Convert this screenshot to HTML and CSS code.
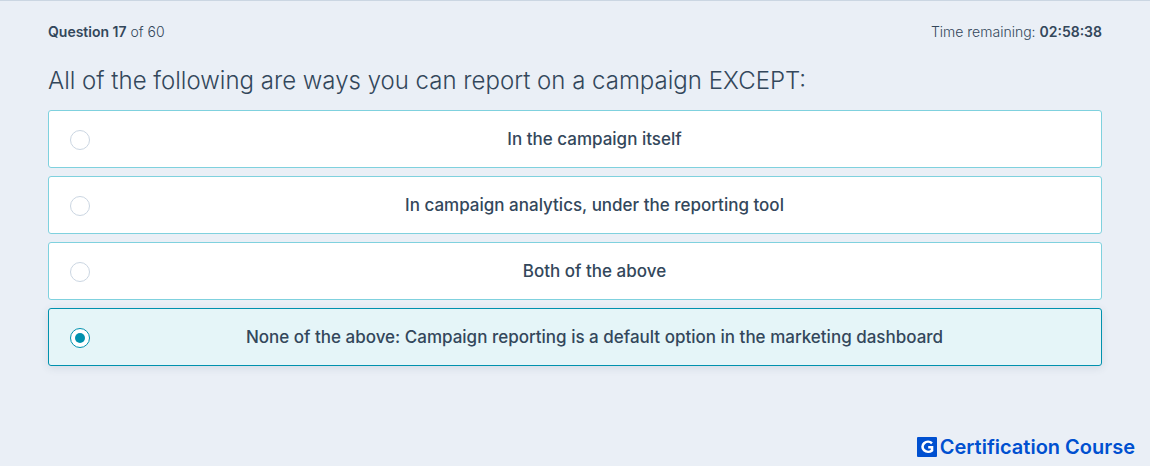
FILE: index.html
```html
<!DOCTYPE html>
<html lang="en">
<head>
<meta charset="utf-8">
<meta name="viewport" content="width=device-width, initial-scale=1">
<title>Certification exam</title>
<link rel="stylesheet" href="styles.css">
</head>
<body>
<main class="exam">
  <header class="status">
    <div><strong>Question 17</strong> of 60</div>
    <div>Time remaining: <strong>02:58:38</strong></div>
  </header>
  <form>
    <fieldset class="question">
      <legend class="title">All of the following are ways you can report on a campaign EXCEPT:</legend>
      <div class="options">
        <label class="option"><input class="radio" type="radio" name="answer"><span class="answer">In the campaign itself</span></label>
        <label class="option"><input class="radio" type="radio" name="answer"><span class="answer">In campaign analytics, under the reporting tool</span></label>
        <label class="option"><input class="radio" type="radio" name="answer"><span class="answer">Both of the above</span></label>
        <label class="option"><input class="radio" type="radio" name="answer" checked><span class="answer">None of the above: Campaign reporting is a default option in the marketing dashboard</span></label>
      </div>
    </fieldset>
  </form>
</main>
<footer class="brand">
  <svg class="mark" viewBox="0 0 20 20" aria-hidden="true">
    <rect width="20" height="20" rx="1" fill="#0050d0"/>
    <path d="M15 6.2A5.6 5 0 1 0 15 13.4V10.2H11.2" fill="none" stroke="#fff" stroke-width="2.6"/>
  </svg>
  <span>Certification Course</span>
</footer>
</body>
</html>
```
FILE: styles.css
```css
* {
  box-sizing: border-box;
}

body {
  margin: 0;
  min-height: 100vh;
  display: flex;
  flex-direction: column;
  border-top: 1px solid #cbd6e2;
  background: #eaeff6;
  color: #33475b;
  font-family: Inter, "Open Sans", sans-serif;
  font-size: 14px;
  line-height: 24px;
}

.exam {
  flex: 1;
  padding: 19px 48px 24px;
}

.status {
  display: flex;
  justify-content: space-between;
  font-weight: 300;
}

.status strong {
  font-weight: 600;
}

.question {
  margin: 0;
  padding: 0;
  border: 0;
  min-width: 0;
}

.title {
  padding: 18px 0 10px;
  font-size: 24px;
  font-weight: 300;
  line-height: 38px;
}

.options {
  display: grid;
  gap: 8px;
}

.option {
  display: flex;
  align-items: center;
  min-height: 58px;
  padding: 8px 2px 8px 21px;
  border: 1px solid #7fd1de;
  border-radius: 3px;
  background: #fff;
  cursor: pointer;
}

.option:has(:checked) {
  border-color: #0091ae;
  background: #e5f5f8;
  box-shadow: 0 2px 8px rgba(51, 71, 91, 0.12);
}

.radio {
  appearance: none;
  flex: none;
  display: grid;
  place-items: center;
  width: 20px;
  height: 20px;
  margin: 2px 0 0;
  border: 1px solid #cbd6e2;
  border-radius: 50%;
  background: #fff;
}

.radio:checked {
  border-color: #0091ae;
}

.radio:checked::before {
  content: "";
  width: 10px;
  height: 10px;
  border-radius: 50%;
  background: #0091ae;
}

.answer {
  flex: 1;
  text-align: center;
  font-size: 17px;
  font-weight: 500;
}

.brand {
  display: flex;
  justify-content: flex-end;
  align-items: center;
  gap: 3px;
  padding: 0 15px 7px;
  color: #0050d0;
  font-size: 20px;
  font-weight: 600;
}

.mark {
  width: 20px;
  height: 20px;
}
```
